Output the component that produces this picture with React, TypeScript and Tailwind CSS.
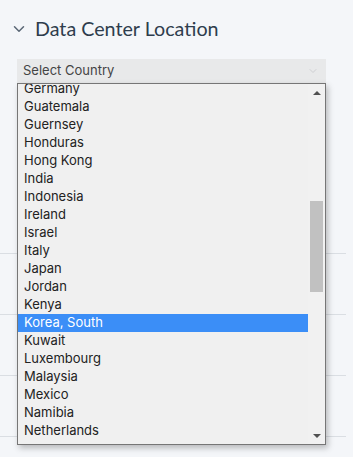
import { ChevronDown } from "lucide-react";

const countries = [
  "Germany",
  "Guatemala",
  "Guernsey",
  "Honduras",
  "Hong Kong",
  "India",
  "Indonesia",
  "Ireland",
  "Israel",
  "Italy",
  "Japan",
  "Jordan",
  "Kenya",
  "Korea, South",
  "Kuwait",
  "Luxembourg",
  "Malaysia",
  "Mexico",
  "Namibia",
  "Netherlands",
];

const selected = "Korea, South";

export default function App() {
  return (
    <div className="relative w-[353px] h-[457px] overflow-hidden bg-[#f4f6f9] font-['Inter',sans-serif]">
      {/* Header */}
      <div className="flex items-center h-[56px] pl-[10px] pt-[2px]">
        <ChevronDown size={18} strokeWidth={2} className="text-[#5a6775]" />
        <span className="ml-[7px] text-[19.7px] text-[#2e3d4d] font-['Lato',sans-serif]">
          Data Center Location
        </span>
      </div>

      {/* Select */}
      <div className="ml-[17px] mt-[3px] w-[309px] h-[24px] bg-[#e8e9ea] flex items-center justify-between pl-[6px] pr-[7px]">
        <span className="text-[13px] text-[#444]">Select Country</span>
        <ChevronDown size={12} strokeWidth={1.5} className="text-[#c4c6c9]" />
      </div>

      {/* Sections behind */}
      <div className="mt-[170px] w-[346px]">
        <div className="h-[1px] bg-[#dadee3]" />
        <div className="h-[60px]" />
        <div className="h-[1px] bg-[#dadee3]" />
        <div className="h-[60px]" />
        <div className="h-[1px] bg-[#dadee3]" />
        <div className="h-[60px]" />
        <div className="h-[1px] bg-[#dadee3]" />
      </div>

      {/* Dropdown list */}
      <div className="absolute left-[17px] top-[83px] w-[309px] h-[362px] border border-[#767676] bg-[#f0f0f0] shadow-[2px_3px_6px_rgba(0,0,0,0.25)] flex overflow-hidden">
        <div className="flex-1 overflow-hidden">
          <div className="-mt-[4px]">
            {countries.map((c) => (
              <div
                key={c}
                className={`h-[18px] flex items-center pl-[6px] text-[13px] ${
                  c === selected ? "bg-[#3b8ef7] text-white" : "text-[#222]"
                }`}
              >
                {c}
              </div>
            ))}
          </div>
        </div>
        {/* Scrollbar */}
        <div className="w-[17px] bg-[#f1f1f1] flex flex-col items-center">
          <div className="h-[17px] flex items-center justify-center">
            <div className="w-0 h-0 border-l-[4px] border-r-[4px] border-b-[4px] border-l-transparent border-r-transparent border-b-[#505050]" />
          </div>
          <div className="h-[100px]" />
          <div className="w-[13px] h-[91px] bg-[#c1c1c1]" />
          <div className="flex-1" />
          <div className="h-[17px] flex items-center justify-center">
            <div className="w-0 h-0 border-l-[4px] border-r-[4px] border-t-[4px] border-l-transparent border-r-transparent border-t-[#505050]" />
          </div>
        </div>
      </div>
    </div>
  );
}
